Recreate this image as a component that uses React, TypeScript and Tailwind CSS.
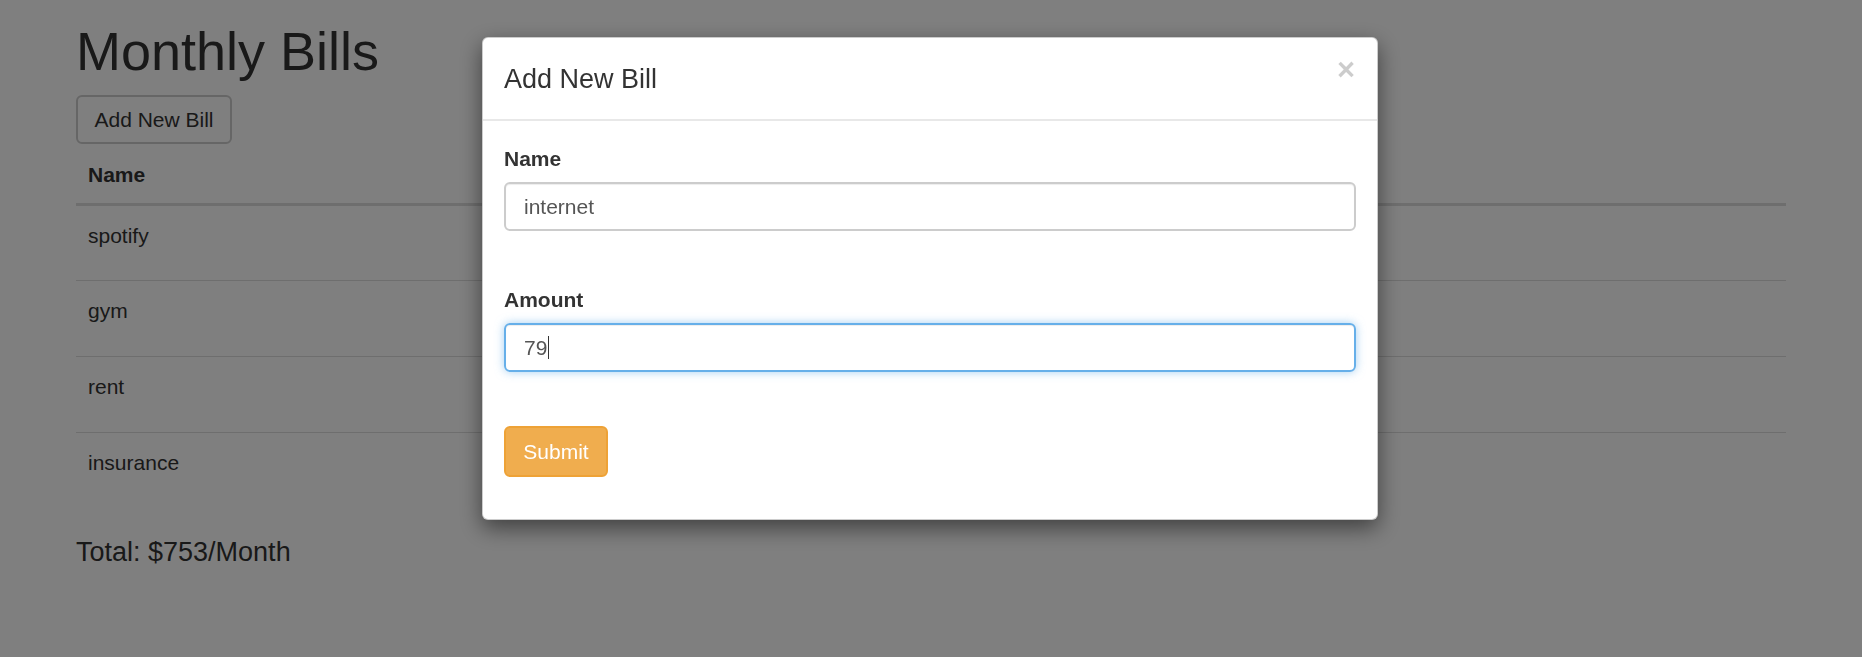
import React from 'react';

const bills = ["spotify", "gym", "rent", "insurance"];

const BillsPage = () => {
    return (
        <div className="min-h-[657px] bg-white pl-[76px] pr-[76px] text-[#333]">
            <h1 className="pt-[22px] text-[54px] leading-[59px] font-normal">Monthly Bills</h1>
            <button className="mt-[14px] flex h-[49px] w-[156px] items-center justify-center rounded-[6px] border-2 border-[#ccc] bg-white text-[21px] text-[#333]">
                Add New Bill
            </button>
            <table className="mt-[4px] w-full border-collapse text-left">
                <thead>
                    <tr className="border-b-[3px] border-[#ddd]">
                        <th className="px-[12px] pt-[12px] pb-[13px] text-[21px] leading-[30px] font-bold">Name</th>
                    </tr>
                </thead>
                <tbody>
                    {bills.map((b, i) => (
                        <tr key={b} className={i > 0 ? "border-t border-[#ddd]" : ""}>
                            <td className="h-[76px] px-[12px] pt-[15px] align-top text-[21px] leading-[30px]">{b}</td>
                        </tr>
                    ))}
                </tbody>
            </table>
            <h4 className="mt-[28px] text-[27px] leading-[30px]">Total: $753/Month</h4>
        </div>
    );
};

const BillModal = () => {
    return (
        <div className="fixed inset-0 flex items-start justify-center bg-black/50 pt-[37px]">
            <div className="mr-[2px] w-[896px] rounded-[6px] border border-black/20 bg-white shadow-[0_8px_22px_rgba(0,0,0,0.5)]">
                <div className="flex items-start justify-between border-b-2 border-[#e8e8e8] pt-[22px] pb-[21px] pl-[21px] pr-[22px]">
                    <h4 className="text-[27px] leading-[38px] text-[#333]">Add New Bill</h4>
                    <span className="mt-[-6px] text-[31px] leading-none font-bold text-black/20">×</span>
                </div>
                <div className="px-[21px] pt-[23px] pb-[42px]">
                    <label className="mb-[8px] block text-[21px] leading-[30px] font-bold text-[#333]">Name</label>
                    <div className="flex h-[49px] items-center rounded-[6px] border-2 border-[#ccc] px-[18px] text-[21px] text-[#555] shadow-[inset_0_1px_1px_rgba(0,0,0,0.075)]">
                        internet
                    </div>
                    <label className="mt-[54px] mb-[8px] block text-[21px] leading-[30px] font-bold text-[#333]">Amount</label>
                    <div className="flex h-[49px] items-center rounded-[6px] border-2 border-[#66afe9] px-[18px] text-[21px] text-[#555] shadow-[inset_0_1px_1px_rgba(0,0,0,0.075),0_0_10px_rgba(102,175,233,0.6)]">
                        79<span className="ml-[1px] h-[23px] w-[1px] bg-[#333]" />
                    </div>
                    <button className="mt-[54px] flex h-[51px] w-[104px] items-center justify-center rounded-[6px] border-2 border-[#eea236] bg-[#f0ad4e] text-[21px] text-white">
                        Submit
                    </button>
                </div>
            </div>
        </div>
    );
};

export default function App() {
    return (
        <div className="font-['Liberation_Sans',Arial,sans-serif]">
            <BillsPage />
            <BillModal />
        </div>
    );
}
